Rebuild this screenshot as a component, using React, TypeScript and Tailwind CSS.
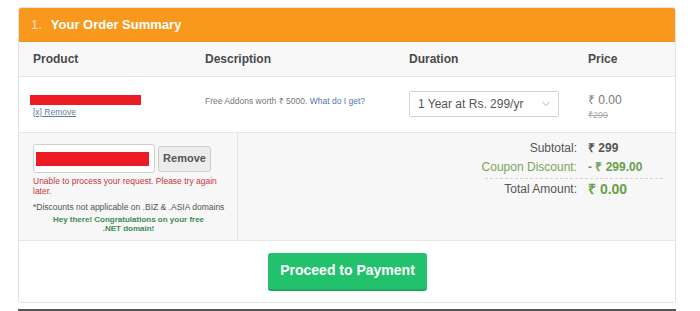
import { ChevronDown } from 'lucide-react';

const cols = 'grid grid-cols-[172px_204px_179px_103px]';

export default function App() {
  return (
    <div className="w-[700px] h-[311px] overflow-hidden bg-white pl-[18px] pt-[7px] font-['Liberation_Sans',Arial,sans-serif]">
      <div className="w-[658px] border border-[#e2e2e2] rounded-[3px] overflow-hidden">
        {/* header */}
        <div className="h-[34px] bg-[#f8991d] flex items-center pl-[12px] text-[13px] font-bold text-white">
          <span className="text-white/70 font-normal mr-[9px]">1.</span>
          <span>Your Order Summary</span>
        </div>

        {/* table head */}
        <div className={`${cols} h-[35px] items-center bg-[#f8f8f8] border-b border-[#e6e6e6] text-[12px] font-bold text-[#4a4a4a]`}>
          <div className="pl-[14px]">Product</div>
          <div className="pl-[14px]">Description</div>
          <div className="pl-[14px]">Duration</div>
          <div className="pl-[14px]">Price</div>
        </div>

        {/* product row */}
        <div className={`${cols} h-[56px] items-center border-b border-[#e6e6e6] bg-white`}>
          <div className="pl-[11px] pt-[2px]">
            <div className="w-[111px] h-[10px] bg-[#ed1c24]" />
            <a className="block ml-[3px] mt-[3px] text-[8.5px] text-[#5b7ea0] underline leading-none">[x] Remove</a>
          </div>
          <div className="pl-[14px] text-[8.5px] text-[#777] -mt-[7px]">
            Free Addons worth ₹ 5000. <span className="text-[#4f79a8]">What do I get?</span>
          </div>
          <div className="pl-[14px] -mt-[2px]">
            <div className="w-[150px] h-[26px] border border-[#d6d6d6] rounded-[2px] bg-white flex items-center justify-between pl-[8px] pr-[6px] text-[12px] text-[#555]">
              <span>1 Year at Rs. 299/yr</span>
              <ChevronDown className="w-[12px] h-[12px] text-[#999]" strokeWidth={1.5} />
            </div>
          </div>
          <div className="pl-[14px] pt-[4px] leading-none">
            <div className="text-[12px] text-[#777]">₹ 0.00</div>
            <div className="text-[9px] text-[#aaa] line-through mt-[5px]">₹299</div>
          </div>
        </div>

        {/* coupon + totals */}
        <div className="grid grid-cols-[219px_1fr] h-[108px] bg-[#f7f7f7] border-b border-[#e6e6e6]">
          <div className="border-r border-[#e4e4e4] pl-[14px] pt-[11px]">
            <div className="flex items-center gap-[3px]">
              <div className="w-[122px] h-[29px] bg-white border border-[#cfcfcf] rounded-[3px] flex items-center pl-[2px]">
                <div className="w-[113px] h-[14px] bg-[#ed1c24]" />
              </div>
              <button className="w-[53px] h-[26px] bg-[#ececec] border border-[#cfcfcf] rounded-[3px] text-[11px] font-bold text-[#555]">
                Remove
              </button>
            </div>
            <p className="mt-[3px] text-[8.5px] leading-[10px] text-[#c4363b] pr-[4px]">
              Unable to process your request. Please try again later.
            </p>
            <p className="mt-[6px] text-[8.5px] leading-[10px] text-[#555]">
              *Discounts not applicable on .BIZ &amp; .ASIA domains
            </p>
            <p className="mt-[3px] text-[8px] leading-[9px] font-bold text-[#3f8a55] text-center pr-[13px]">
              Hey there! Congratulations on your free<br />.NET domain!
            </p>
          </div>
          <div className="pt-[8px] text-[12px] leading-[14px]">
            <div className="grid grid-cols-[339px_1fr] gap-x-[11px] gap-y-[5px]">
              <div className="text-right text-[#555]">Subtotal:</div>
              <div className="font-bold text-[#555]">₹ 299</div>
              <div className="text-right text-[#7aa55a]">Coupon Discount:</div>
              <div className="font-bold text-[#6aa04a]">- ₹ 299.00</div>
            </div>
            <div className="ml-[247px] w-[178px] border-t border-dashed border-[#d5d5d5] mt-[4px]" />
            <div className="grid grid-cols-[339px_1fr] gap-x-[11px] mt-[3px] items-center">
              <div className="text-right text-[#555]">Total Amount:</div>
              <div className="font-bold text-[14px] text-[#6aa04a]">₹ 0.00</div>
            </div>
          </div>
        </div>

        {/* action */}
        <div className="h-[61px] bg-white flex items-center pl-[249px]">
          <button className="w-[159px] h-[38px] bg-[#22c16c] border-b-2 border-[#1ea65d] rounded-[3px] text-white text-[14px] font-bold">
            Proceed to Payment
          </button>
        </div>
      </div>
      <div className="w-[658px] h-[2px] mt-[6px] bg-[#555]" />
    </div>
  );
}
